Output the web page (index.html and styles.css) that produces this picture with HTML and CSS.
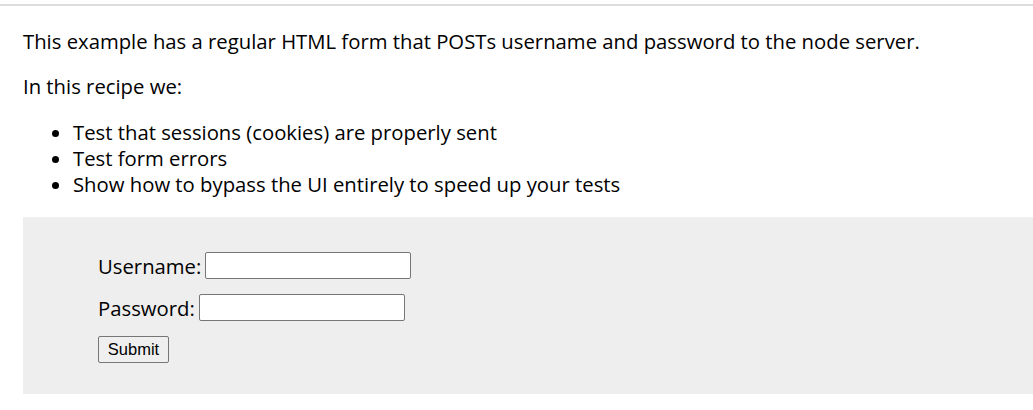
FILE: index.html
```html
<!DOCTYPE html>
<html lang="en">
<head>
<meta charset="utf-8">
<title>Logging in - HTML form</title>
<link rel="stylesheet" href="styles.css">
</head>
<body>
<div class="topline"></div>
<main class="content">
  <p class="intro">This example has a regular HTML form that POSTs username and password to the node server.</p>
  <p class="intro second">In this recipe we:</p>
  <ul class="points">
    <li>Test that sessions (cookies) are properly sent</li>
    <li>Test form errors</li>
    <li>Show how to bypass the UI entirely to speed up your tests</li>
  </ul>
  <form class="login-box" action="/login" method="post">
    <div class="row">
      <label class="field-label" for="username">Username:</label>
      <input class="field" id="username" name="username" type="text">
    </div>
    <div class="row">
      <label class="field-label" for="password">Password:</label>
      <input class="field" id="password" name="password" type="password">
    </div>
    <div class="row">
      <button class="submit" type="submit">Submit</button>
    </div>
  </form>
</main>
</body>
</html>
```
FILE: styles.css
```css
html, body {
  margin: 0;
  padding: 0;
  background: #ffffff;
}

body {
  font-family: "Open Sans", "Noto Sans", sans-serif;
  font-size: 20.3px;
  line-height: 26px;
  color: #000000;
  overflow: hidden;
}

.topline {
  height: 2px;
  margin-top: 4px;
  background: #dcdcdc;
}

.content {
  padding-left: 23px;
}

.intro {
  margin: 22px 0 0 0;
}

.intro.second {
  margin-top: 19px;
}

.points {
  margin: 20px 0 0 0;
  padding-left: 50px;
}

.login-box {
  margin: 20px 0 0 0;
  padding: 35px 0 31px 75px;
  background: #eeeeee;
  display: flex;
  flex-direction: column;
  gap: 15px;
}

.row {
  display: flex;
  align-items: center;
  height: 27px;
}

.field-label {
  margin-right: 4px;
}

.field {
  box-sizing: border-box;
  width: 206px;
  height: 27px;
  margin: 0;
  padding: 1px 2px;
  border: 1px solid #767676;
  border-radius: 2px;
  background: #ffffff;
  font-family: "Liberation Sans", Arial, sans-serif;
  font-size: 16px;
}

.submit {
  box-sizing: border-box;
  width: 71px;
  height: 27px;
  margin: 0;
  padding: 0;
  border: 1px solid #767676;
  border-radius: 2px;
  background: #efefef;
  font-family: "Liberation Sans", Arial, sans-serif;
  font-size: 16.5px;
  color: #000000;
}
```
